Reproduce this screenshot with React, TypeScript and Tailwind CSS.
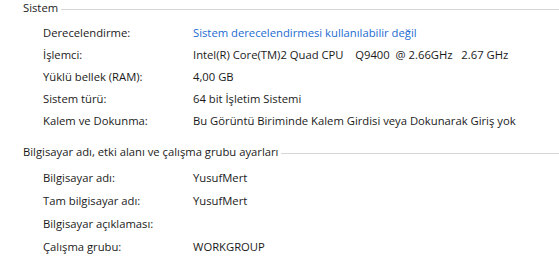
type Row = { label: string; value: string; link?: boolean }

const systemRows: Row[] = [
  { label: 'Derecelendirme:', value: 'Sistem derecelendirmesi kullanılabilir değil', link: true },
  { label: 'İşlemci:', value: 'Intel(R) Core(TM)2 Quad CPU    Q9400  @ 2.66GHz   2.67 GHz' },
  { label: 'Yüklü bellek (RAM):', value: '4,00 GB' },
  { label: 'Sistem türü:', value: '64 bit İşletim Sistemi' },
  { label: 'Kalem ve Dokunma:', value: 'Bu Görüntü Biriminde Kalem Girdisi veya Dokunarak Giriş yok' },
]

const computerRows: Row[] = [
  { label: 'Bilgisayar adı:', value: 'YusufMert' },
  { label: 'Tam bilgisayar adı:', value: 'YusufMert' },
  { label: 'Bilgisayar açıklaması:', value: '' },
  { label: 'Çalışma grubu:', value: 'WORKGROUP' },
]

function SectionHeader({ title }: { title: string }) {
  return (
    <div className="flex items-center h-4 pl-[23px]">
      <span className="whitespace-nowrap">{title}</span>
      <div className="flex-1 h-px bg-[#d5d5d5] ml-[3px] mt-[2px]" />
    </div>
  )
}

function InfoRow({ row, tall }: { row: Row; tall?: boolean }) {
  return (
    <div className={`flex items-center pl-[43px] ${tall ? 'h-[23px]' : 'h-[22px]'}`}>
      <span className="w-[150px] shrink-0 whitespace-nowrap">{row.label}</span>
      <span className={`whitespace-pre ${row.link ? 'text-[#1c6bd1]' : ''}`}>{row.value}</span>
    </div>
  )
}

export default function App() {
  return (
    <div
      className="w-[559px] h-[263px] bg-white text-[#1a1a1a] text-[11.25px] leading-4 overflow-hidden"
      style={{ fontFamily: '"Open Sans", "Noto Sans", sans-serif' }}
    >
      <SectionHeader title="Sistem" />
      <div className="mt-[6px]">
        {systemRows.map(r => <InfoRow key={r.label} row={r} />)}
      </div>
      <div className="mt-3">
        <SectionHeader title="Bilgisayar adı, etki alanı ve çalışma grubu ayarları" />
      </div>
      <div className="mt-[6px]">
        {computerRows.map(r => <InfoRow key={r.label} row={r} tall />)}
      </div>
    </div>
  )
}
